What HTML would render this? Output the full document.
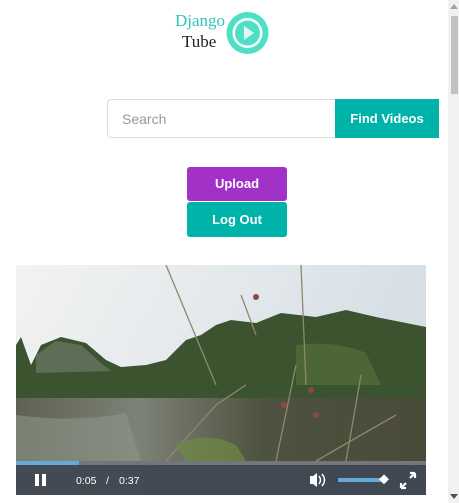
<!DOCTYPE html>
<html><head><style>
body{margin:0;width:459px;height:503px;overflow:hidden;background:#fff;font-family:"Liberation Sans",sans-serif;position:relative}
.sb{position:absolute;left:448px;top:0;width:11px;height:503px;background:#f1f1f1}
.th{position:absolute;left:451px;top:16px;width:7px;height:78px;background:#c1c1c1}
.logo1{position:absolute;left:175px;top:11px;font-family:"Liberation Serif",serif;font-size:17px;color:#2cc7bb}
.logo2{position:absolute;left:182px;top:32px;font-family:"Liberation Serif",serif;font-size:17px;color:#222}
.search{position:absolute;left:107px;top:99px;width:228px;height:39px;box-sizing:border-box;border:1px solid #ddd;border-right:none;border-radius:4px 0 0 4px;color:#999;font-size:14px;padding:11px 14px}
.find{position:absolute;left:335px;top:99px;width:104px;height:39px;background:#00b3a9;color:#fff;font-weight:bold;font-size:13px;text-align:center;line-height:39px}
.btn{position:absolute;left:187px;width:100px;color:#fff;font-weight:bold;font-size:13px;text-align:center;border-radius:3px}
</style></head><body>
<div class="logo1">Django</div><div class="logo2">Tube</div>
<svg style="position:absolute;left:225px;top:10px" width="45" height="46" viewBox="0 0 45 46">
<circle cx="22.5" cy="23" r="21" fill="#4de0c7"/><circle cx="22.5" cy="23" r="15" fill="#fff"/><circle cx="22.5" cy="23" r="12.5" fill="#4de0c7"/>
<path d="M19 16 L29 23 L19 30 Z" fill="#e6f7f3"/></svg>
<div class="search">Search</div><div class="find">Find Videos</div>
<div class="btn" style="top:167px;height:34px;line-height:34px;background:#a232c7">Upload</div>
<div class="btn" style="top:202px;height:35px;line-height:35px;background:#00b3a9">Log Out</div>
<svg style="position:absolute;left:16px;top:265px" width="410" height="230" viewBox="0 0 410 230">
<defs><linearGradient id="s" x1="0" y1="0" x2="1" y2="0.3"><stop offset="0" stop-color="#f2f3f1"/><stop offset="1" stop-color="#d5dee6"/></linearGradient>
<linearGradient id="w" x1="0" y1="0" x2="1" y2="0"><stop offset="0" stop-color="#5e6254"/><stop offset="0.3" stop-color="#7d8276"/><stop offset="0.6" stop-color="#4e5240"/><stop offset="1" stop-color="#4a4a38"/></linearGradient></defs>
<rect width="410" height="230" fill="url(#s)"/>
<path d="M0 80 L5 72 L15 100 L25 80 L45 72 L70 78 L90 95 L105 102 L130 100 L150 95 L170 75 L185 70 L200 60 L215 55 L240 58 L265 48 L300 52 L330 45 L360 52 L390 58 L410 62 L410 135 L0 140Z" fill="#3c5330"/>
<path d="M20 90 L40 76 L65 80 L85 98 L95 106 L20 108Z" fill="#677560" opacity=".8"/>
<path d="M280 80 Q320 75 350 88 L365 120 L280 120Z" fill="#4d6636"/>
<rect y="133" width="410" height="67" fill="url(#w)"/>
<path d="M0 150 Q60 158 110 148 L125 196 L0 196Z" fill="#8f9589" opacity=".6"/>
<path d="M150 196 L200 140 L230 120 M260 196 L280 100 M330 196 L345 110 M380 150 L300 196 M200 120 L150 0 M290 120 L285 0 M240 70 L225 30" stroke="#8b8a70" stroke-width="1.3" fill="none"/>
<path d="M160 180 Q190 165 220 180 L230 196 L170 196Z" fill="#6f8a42" opacity=".7"/>
<circle cx="268" cy="140" r="3" fill="#8a4a40"/><circle cx="295" cy="125" r="3" fill="#8a4a40"/><circle cx="300" cy="150" r="3" fill="#8a4a40"/><circle cx="240" cy="32" r="3" fill="#8a4a40"/>
<rect y="196" width="410" height="4" fill="#73777b"/><rect y="196" width="63" height="4" fill="#66a8d8"/>
<rect y="200" width="410" height="30" fill="#2b333f" opacity=".88"/>
<rect x="19" y="209" width="4" height="12" fill="#fff"/><rect x="26" y="209" width="4" height="12" fill="#fff"/>
<text x="60" y="219" fill="#fff" font-size="10.5" font-family="Liberation Sans">0:05</text>
<text x="90" y="219" fill="#fff" font-size="10.5" font-family="Liberation Sans">/</text>
<text x="103" y="219" fill="#fff" font-size="10.5" font-family="Liberation Sans">0:37</text>
<path d="M294 211 h3 l4 -3 v14 l-4 -3 h-3z" fill="#fff"/><path d="M303 211 q3 4 0 8 M306 209 q5 6 0 12" stroke="#fff" stroke-width="1.5" fill="none"/>
<rect x="322" y="213" width="46" height="4" fill="#66a8d8"/><rect x="364" y="211" width="7" height="7" transform="rotate(45 368 215)" fill="#fff"/>
<path d="M385 223 l5 -5 M385 223 v-5 M385 223 h5 M399 208 l-5 5 M399 208 v5 M399 208 h-5" stroke="#fff" stroke-width="2.2" fill="none"/>
</svg>
<div class="sb"></div><div class="th"></div>
<svg style="position:absolute;left:450px;top:4px" width="8" height="6"><path d="M0 5 L4 0 L8 5Z" fill="#a3a3a3"/></svg>
<svg style="position:absolute;left:450px;top:494px" width="8" height="6"><path d="M0 0 L4 5 L8 0Z" fill="#505050"/></svg>
</body></html>
